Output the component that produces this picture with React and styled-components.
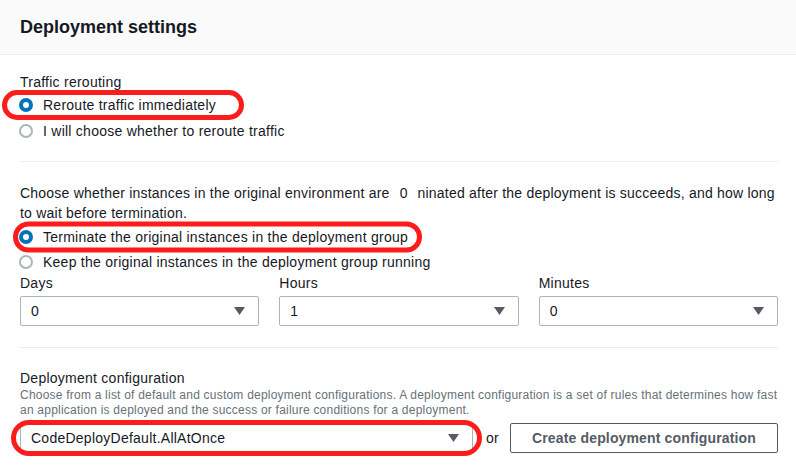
import React from "react";
import styled, { createGlobalStyle } from "styled-components";

const Global = createGlobalStyle`
  html, body { margin: 0; padding: 0; background: #ffffff; }
  body { font-family: "Liberation Sans", Arial, sans-serif; color: #16191f; }
`;

const Page = styled.div`
  width: 796px;
  height: 471px;
  overflow: hidden;
  background: #fff;
`;

const Header = styled.header`
  height: 54px;
  display: flex;
  align-items: center;
  padding: 0 20px;
  background: #fafafa;
  border-bottom: 1px solid #eaeded;
`;

const Title = styled.h2`
  margin: 0;
  font-size: 18px;
  font-weight: 700;
  color: #16191f;
  line-height: 22px;
`;

const Body = styled.div`
  padding: 17px 18px 0 20px;
  font-size: 14px;
  letter-spacing: 0.25px;
`;

const FieldLabel = styled.div`
  font-size: 14px;
  line-height: ${(p) => p.$lh || 20}px;
  margin-bottom: ${(p) => p.$mb || 0}px;
  color: #16191f;
`;

const RadioGroup = styled.div`
  display: flex;
  flex-direction: column;
  margin-top: ${(p) => p.$mt || 0}px;
`;

const RadioRow = styled.div`
  position: relative;
  display: flex;
  align-items: center;
  height: ${(p) => p.$h || 26}px;
  gap: 10px;
`;

const RadioDot = styled.span`
  box-sizing: border-box;
  width: 14px;
  height: 14px;
  margin-left: -1px;
  border-radius: 50%;
  background: #fff;
  border: ${(p) => (p.$checked ? "4px solid #0073bb" : "2px solid #aab7b8")};
  flex: none;
`;

const RadioText = styled.span`
  font-size: 14px;
  line-height: 20px;
  color: #16191f;
`;

const Highlight = styled.span`
  position: absolute;
  box-sizing: border-box;
  left: ${(p) => p.$left}px;
  width: ${(p) => p.$width}px;
  top: 50%;
  height: ${(p) => p.$height || 30}px;
  transform: translateY(-50%);
  border: 5px solid #fc1c1c;
  border-radius: 18px;
  pointer-events: none;
`;

const Divider = styled.hr`
  border: 0;
  border-top: 1px solid #eaeded;
  margin: ${(p) => p.$mt}px 0 ${(p) => p.$mb}px 0;
`;

const Paragraph = styled.p`
  margin: 0;
  font-size: 14px;
  line-height: 20px;
  letter-spacing: 0.22px;
  white-space: nowrap;
  color: #16191f;
`;

const Zero = styled.span`
  margin: 0 10px 0 6px;
  letter-spacing: 0;
`;

const DurationGrid = styled.div`
  display: grid;
  grid-template-columns: repeat(3, 1fr);
  column-gap: 20px;
`;

const Field = styled.div`
  display: flex;
  flex-direction: column;
`;

const SelectBox = styled.div`
  box-sizing: border-box;
  height: 30px;
  display: flex;
  align-items: center;
  justify-content: space-between;
  padding: 0 13px 0 10px;
  border: 1px solid #aab7b8;
  border-radius: 2px;
  background: #fff;
  font-size: 14px;
  color: #16191f;
`;

const Caret = () => (
  <svg width="11" height="8" viewBox="0 0 11 8" aria-hidden="true">
    <path d="M0 0 H11 L5.5 8 Z" fill="#545b64" />
  </svg>
);

const Description = styled.div`
  font-size: 12px;
  line-height: 15px;
  letter-spacing: 0.22px;
  white-space: nowrap;
  color: #687078;
`;

const ConfigRow = styled.div`
  display: flex;
  align-items: center;
  gap: 13px;
  margin-top: 5px;
`;

const SelectWrap = styled.div`
  position: relative;
  flex: 1;
`;

const SelectHighlight = styled.span`
  position: absolute;
  left: -9px;
  right: -9px;
  top: -3px;
  bottom: -3px;
  border: 5px solid #fc1c1c;
  border-radius: 18px;
  pointer-events: none;
`;

const Or = styled.span`
  font-size: 14px;
  color: #16191f;
`;

const Button = styled.button`
  box-sizing: border-box;
  width: 268px;
  height: 30px;
  margin-left: -2px;
  background: #fff;
  border: 1px solid #545b64;
  border-radius: 2px;
  font-family: "Liberation Sans", Arial, sans-serif;
  font-size: 14px;
  font-weight: 700;
  color: #545b64;
  letter-spacing: 0.15px;
  cursor: pointer;
`;

function Radio({ checked, children, h, hl }) {
  return (
    <RadioRow $h={h}>
      <RadioDot $checked={checked} />
      <RadioText>{children}</RadioText>
      {hl && <Highlight $left={hl.left} $width={hl.width} $height={hl.height} />}
    </RadioRow>
  );
}

export default function App() {
  return (
    <Page>
      <Global />
      <Header>
        <Title>Deployment settings</Title>
      </Header>
      <Body>
        <FieldLabel>Traffic rerouting</FieldLabel>
        <RadioGroup>
          <Radio checked h={26} hl={{ left: -18, width: 242, height: 30 }}>
            Reroute traffic immediately
          </Radio>
          <Radio h={26}>I will choose whether to reroute traffic</Radio>
        </RadioGroup>

        <Divider $mt={17} $mb={21} />

        <Paragraph>
          Choose whether instances in the original environment are <Zero>0</Zero>ninated after the deployment is succeeds, and how long
          <br />
          to wait before termination.
        </Paragraph>
        <RadioGroup $mt={1}>
          <Radio checked h={25} hl={{ left: -7, width: 409, height: 31 }}>
            Terminate the original instances in the deployment group
          </Radio>
          <Radio h={25}>Keep the original instances in the deployment group running</Radio>
        </RadioGroup>

        <DurationGrid>
          {[
            ["Days", "0"],
            ["Hours", "1"],
            ["Minutes", "0"],
          ].map(([label, value]) => (
            <Field key={label}>
              <FieldLabel $lh={18} $mb={4}>{label}</FieldLabel>
              <SelectBox>
                <span>{value}</span>
                <Caret />
              </SelectBox>
            </Field>
          ))}
        </DurationGrid>

        <Divider $mt={21} $mb={20} />

        <FieldLabel>Deployment configuration</FieldLabel>
        <Description>
          Choose from a list of default and custom deployment configurations. A deployment configuration is a set of rules that determines how fast
          <br />
          an application is deployed and the success or failure conditions for a deployment.
        </Description>
        <ConfigRow>
          <SelectWrap>
            <SelectBox>
              <span>CodeDeployDefault.AllAtOnce</span>
              <Caret />
            </SelectBox>
            <SelectHighlight />
          </SelectWrap>
          <Or>or</Or>
          <Button>Create deployment configuration</Button>
        </ConfigRow>
      </Body>
    </Page>
  );
}
